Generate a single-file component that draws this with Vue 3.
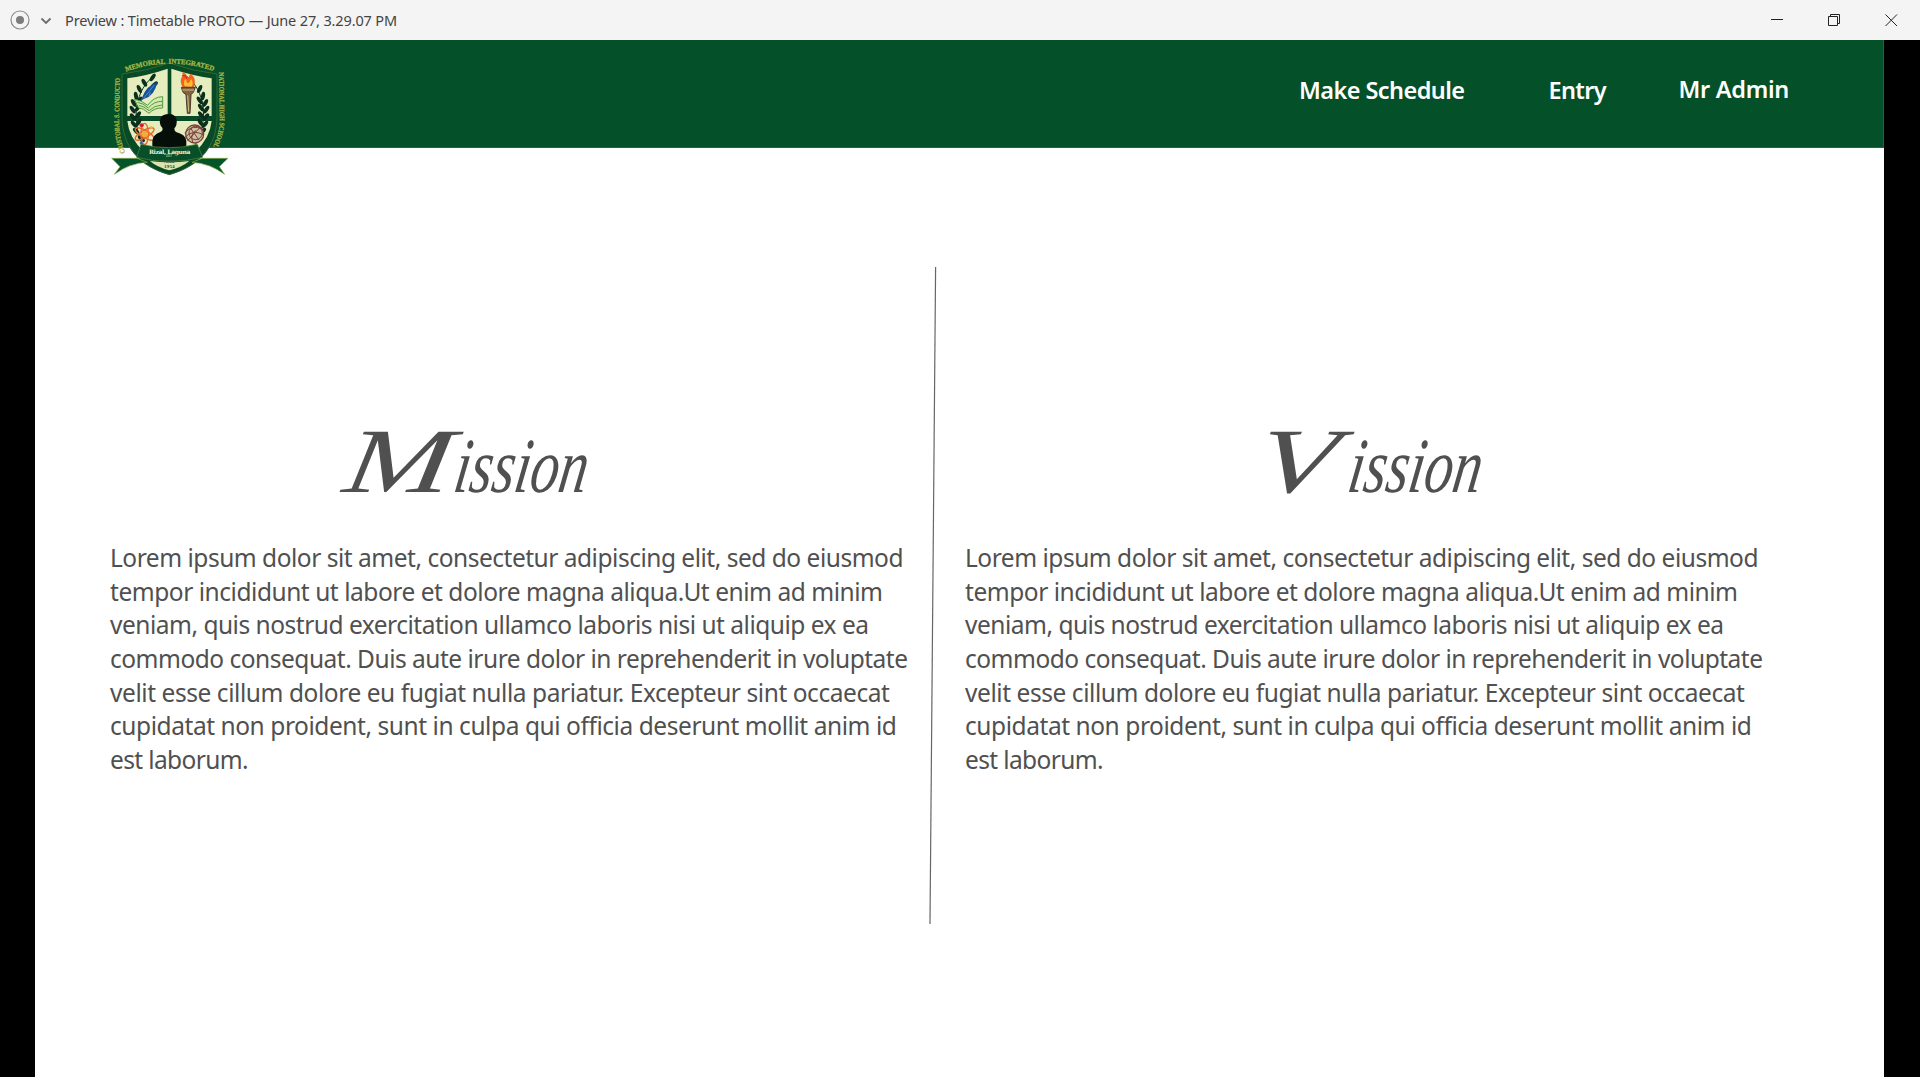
<script setup>
// Spreads the letters of a line so that it fills the given measure.
const vFit = {
  mounted(el, { value }) {
    el.style.letterSpacing = '0px'
    const natural = el.getBoundingClientRect().width
    el.style.letterSpacing = (value - natural) / el.textContent.length + 'px'
  }
}

const lines = [
  { text: 'Lorem ipsum dolor sit amet, consectetur adipiscing elit, sed do eiusmod', width: 793 },
  { text: 'tempor incididunt ut labore et dolore magna aliqua.Ut enim ad minim', width: 772.5 },
  { text: 'veniam, quis nostrud exercitation ullamco laboris nisi ut aliquip ex ea', width: 758.5 },
  { text: 'commodo consequat. Duis aute irure dolor in reprehenderit in voluptate', width: 797.5 },
  { text: 'velit esse cillum dolore eu fugiat nulla pariatur. Excepteur sint occaecat', width: 779.5 },
  { text: 'cupidatat non proident, sunt in culpa qui officia deserunt mollit anim id', width: 786.5 },
  { text: 'est laborum.', width: 138 }
]

const columns = [
  { id: 'mission', initial: 'M', rest: 'ission' },
  { id: 'vision', initial: 'V', rest: 'ission' }
]

const leaves = [
  [158, 97, 35], [133, 113, -30], [163, 119, 50], [118, 132, -25], [108, 153, -10],
  [101, 174, -30], [98, 194, -35], [99, 216, -40], [102, 238, -40], [109, 259, -45],
  [118, 166, 35], [114, 188, 35], [114, 210, 35], [116, 232, 30], [124, 281, -50]
]
</script>

<template>
  <div class="window">
    <div class="titlebar">
      <svg class="record" width="20" height="20" viewBox="0 0 20 20">
        <circle cx="10" cy="10" r="9" fill="none" stroke="#8c8c8c" stroke-width="1.2" />
        <circle cx="10" cy="10" r="4" fill="#7c7c7c" />
      </svg>
      <svg class="chevron" width="12" height="8" viewBox="0 0 12 8">
        <path d="M1.5 1.5L6 6L10.5 1.5" fill="none" stroke="#6c6c6c" stroke-width="1.8" />
      </svg>
      <span v-fit="332" class="caption">Preview : Timetable PROTO — June 27, 3.29.07 PM</span>
      <div class="controls">
        <svg width="13" height="13" viewBox="0 0 13 13"><path d="M0 5.5H12" /></svg>
        <svg width="13" height="13" viewBox="0 0 13 13"><path d="M.5 2.5H9.5V11.5H.5ZM2.5 2.5V.5H11.5V9.5H9.5" /></svg>
        <svg width="13" height="13" viewBox="0 0 13 13"><path d="M.5 .5L12 12M12 .5L.5 12" /></svg>
      </div>
    </div>

    <div class="stage">
      <div class="page">
        <header>
          <svg class="crest" width="140" height="140" viewBox="0 0 420 420">
            <defs>
              <path id="arc-left" d="M76 322Q57 285 57 220L60 84" />
              <path id="arc-top" d="M78 80Q208 32 343 79" />
              <path id="arc-right" d="M357 82L359 220Q360 270 332 317" />
            </defs>
            <path d="M66 87Q137 79 208 54Q279 79 351 87V213C351 305 299 363 208 389C117 363 66 305 66 213Z" fill="#064b25" stroke="#356632" stroke-width="3" />
            <path d="M82 100Q145 91 203 71V213H82ZM214 71Q275 91 335 100V213H214ZM82 228H203V320H132Q87 279 82 228ZM214 228H335Q330 279 286 320H214Z" fill="#e5edbf" />
            <g fill="none" stroke="#0c3522" stroke-width="3">
              <path d="M161 94C108 133 91 220 128 299" />
              <path d="M260 94C314 136 328 225 286 299" />
            </g>
            <g fill="#0b2f1c">
              <ellipse v-for="(leaf, i) in leaves" :key="'l' + i" :cx="leaf[0]" :cy="leaf[1]" rx="6" ry="13" :transform="`rotate(${leaf[2]} ${leaf[0]} ${leaf[1]})`" />
              <ellipse v-for="(leaf, i) in leaves.slice(3)" :key="'r' + i" :cx="417 - leaf[0]" :cy="leaf[1]" rx="6" ry="13" :transform="`rotate(${-leaf[2]} ${417 - leaf[0]} ${leaf[1]})`" />
            </g>
            <g fill="#d7e8ae" stroke="#4f9c42" stroke-width="3">
              <path d="M103 163Q124 165 143 181Q161 155 188 155V189Q163 188 147 205Q129 188 116 189Z" />
              <path d="M112 172Q130 174 145 189Q163 168 187 169M116 181Q132 183 147 197Q164 181 186 180" fill="none" />
            </g>
            <path d="M172 111Q139 122 126 158L119 169L133 161Q164 153 172 111Z" fill="#17519b" />
            <path d="M162 121L131 160M151 142L147 154" stroke="#72a8d4" stroke-width="2" />
            <path d="M248 127C234 97 251 102 247 82C260 83 258 94 266 99L270 86C285 93 288 109 281 128Z" fill="#f1641e" />
            <path d="M254 124Q248 106 259 101Q258 116 267 114L273 102Q282 113 275 126Z" fill="#ffbd32" />
            <path d="M247 92Q260 91 260 101" stroke="#d72418" stroke-width="4" fill="none" />
            <path d="M244 127H286L280 142L273 149L270 205H262L258 149L249 142Z" fill="#806142" stroke="#463c2b" stroke-width="3" />
            <path d="M247 135H282M263 151L266 200" stroke="#d5bd83" stroke-width="3" />
            <g fill="none" stroke="#e7682c" stroke-width="4">
              <ellipse cx="134" cy="267" rx="11" ry="32" />
              <ellipse cx="134" cy="267" rx="11" ry="32" transform="rotate(60 134 267)" />
              <ellipse cx="134" cy="267" rx="11" ry="32" transform="rotate(120 134 267)" />
            </g>
            <circle cx="134" cy="267" r="9" fill="#f3ac39" />
            <circle cx="125" cy="241" r="6" fill="#d4202c" />
            <circle cx="154" cy="247" r="4" fill="#e6bf23" />
            <circle cx="124" cy="294" r="5" fill="#4861ac" />
            <circle cx="284" cy="267" r="26" fill="#cdbfa0" />
            <g fill="none" stroke="#793f39" stroke-width="4">
              <circle cx="284" cy="267" r="27" />
              <circle cx="287" cy="264" r="20" stroke-width="3" />
              <path d="M254 264Q279 236 307 253M255 277Q277 252 310 269M263 287L301 246M272 250L297 285M278 291Q269 267 288 257" stroke-width="3" />
            </g>
            <path d="M157 308V288Q159 269 181 261Q190 257 187 248Q175 237 182 218Q188 207 207 207Q226 207 230 224Q232 240 223 250Q222 258 230 262Q257 269 259 288V308Z" fill="#050e09" />
            <path d="M35 340H111L142 352Q90 354 43 388L60 365ZM384 340H306L276 352Q326 354 374 388L358 365Z" fill="#04562a" stroke="#8baa45" stroke-width="2" />
            <path d="M123 298Q205 318 292 298L308 337Q208 362 110 337Z" fill="#064f28" stroke="#5e8743" stroke-width="2" />
            <path d="M150 348Q208 356 268 348Q244 368 208 376Q171 367 150 348Z" fill="#d9e4b0" />
            <text x="147" y="326" textLength="124" class="crest-place">Rizal, Laguna</text>
            <text x="198" y="336" class="crest-tiny">2017</text>
            <text x="192" y="354" textLength="32" class="crest-tiny dark">FOUNDED</text>
            <text x="193" y="368" textLength="31" class="crest-year">1954</text>
            <g class="crest-ring">
              <text><textPath href="#arc-left" textLength="226" lengthAdjust="spacingAndGlyphs">CRISTOBAL S. CONDUCTO</textPath></text>
              <text><textPath href="#arc-top" textLength="268">MEMORIAL&#160; INTEGRATED</textPath></text>
              <text><textPath href="#arc-right" textLength="226" lengthAdjust="spacingAndGlyphs">NATIONAL HIGH SCHOOL</textPath></text>
            </g>
          </svg>
          <nav>
            <a v-fit="165.5" class="schedule">Make Schedule</a>
            <a v-fit="57.5" class="entry">Entry</a>
            <a v-fit="110.5" class="admin">Mr Admin</a>
          </nav>
        </header>

        <main>
          <template v-for="(column, index) in columns" :key="column.id">
            <svg v-if="index" class="divider" width="8" height="660" viewBox="0 0 8 660">
              <path d="M6.6 2L1 659" stroke="#666" stroke-width="1.2" />
            </svg>
            <section :class="column.id">
              <h1><span class="initial">{{ column.initial }}</span><span class="rest">{{ column.rest }}</span></h1>
              <p>
                <span v-for="line in lines" :key="line.text" class="line"><span v-fit="line.width" class="run">{{ line.text }}</span></span>
              </p>
            </section>
          </template>
        </main>
      </div>
    </div>
  </div>
</template>

<style>
body {
  margin: 0;
  overflow: hidden;
}
</style>

<style scoped>
.window {
  display: flex;
  flex-direction: column;
  width: 1920px;
  height: 1077px;
  overflow: hidden;
  background: #000;
  font-family: "Noto Sans", "Open Sans", sans-serif;
}

.titlebar {
  display: flex;
  align-items: center;
  flex: none;
  box-sizing: border-box;
  height: 40px;
  padding-left: 10px;
  background: #f4f4f4;
}

.chevron {
  margin: 1px 13px 0 10px;
}

.caption {
  color: #444;
  font-size: 14.5px;
  line-height: 20px;
  white-space: pre;
}

.controls {
  display: flex;
  gap: 44px;
  margin: 0 22px 0 auto;
}

.controls path {
  fill: none;
  stroke: #222;
  stroke-width: 1;
}

.stage {
  display: flex;
  flex: 1;
  padding: 0 36px 0 35px;
}

.page {
  flex: 1;
  background: #fff;
}

header {
  position: relative;
  box-sizing: border-box;
  height: 108px;
  border: solid #246541;
  border-width: 0 1px 1px 0;
  background: #045028;
}

.crest {
  position: absolute;
  top: 5px;
  left: 65px;
}

.crest-ring {
  fill: #a9b544;
  stroke: #a9b544;
  stroke-width: 0.8;
  font: bold 21px "Liberation Serif", serif;
}

.crest-place {
  fill: #f1f4d9;
  font: bold 18px "DejaVu Serif", serif;
}

.crest-tiny {
  fill: #b2c59b;
  font: bold 8px "Liberation Sans", sans-serif;
}

.crest-tiny.dark {
  fill: #38583b;
}

.crest-year {
  fill: #183f22;
  font: bold 14px "Liberation Serif", serif;
}

nav {
  display: flex;
  justify-content: flex-end;
  padding: 33px 94px 0 0;
}

nav a {
  color: #fff;
  font-size: 23.5px;
  font-weight: 600;
  line-height: 34px;
  white-space: pre;
}

.entry {
  margin-left: 84px;
}

.admin {
  margin: -1px 0 0 72.5px;
}

main {
  display: flex;
  align-items: flex-start;
}

section {
  width: 819px;
  padding: 258px 0 0 75px;
  box-sizing: content-box;
}

.vision {
  padding-left: 28px;
}

.divider {
  flex: none;
  margin: 117px 0 0;
}

h1 {
  display: flex;
  align-items: baseline;
  height: 135px;
  margin: 0 0 0 231px;
  color: #505050;
  font: italic 400 78px/110px "Liberation Serif", serif;
}

.vision h1 {
  margin-left: 289px;
}

.initial {
  width: 110px;
  font-size: 92px;
  transform: skewX(-9deg) scaleX(1.4);
  transform-origin: left 78%;
}

.rest {
  transform: skewX(-9deg) scaleX(0.73);
  transform-origin: left 78%;
}

.vision .initial {
  width: 91px;
}

p {
  margin: 0;
  color: #505050;
  font-size: 24.5px;
}

.line {
  display: block;
  height: 33.7px;
  line-height: 33.7px;
  white-space: pre;
}
</style>
